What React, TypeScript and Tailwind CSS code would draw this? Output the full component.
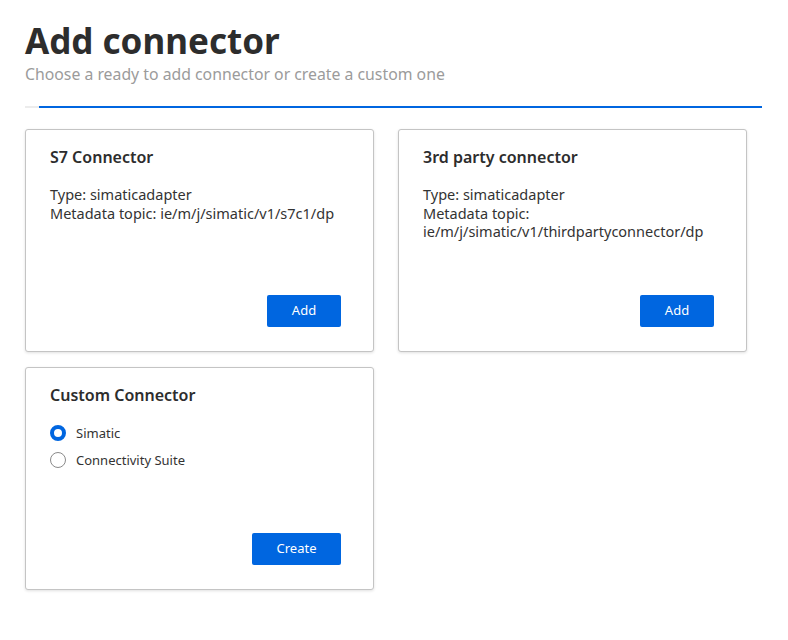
import React, { useState } from 'react';

const font = { fontFamily: '"Noto Sans", "Open Sans", sans-serif' };

const ConnectorCard = ({ title, type, topic, wrap }: { title: string; type: string; topic: string; wrap?: boolean }) => (
  <div className="flex h-[223px] w-[349px] flex-col rounded-[3px] border border-[#c4c4c4] bg-white px-6 pb-6 pt-[16px] shadow-[0_1px_3px_rgba(0,0,0,0.12)]">
    <h2 className="text-[16px] font-semibold leading-[22px] text-[#2d2d2d]">{title}</h2>
    <div className="mt-[17px] text-[14.5px] leading-[18.5px] text-[#333]">
      <p>Type: {type}</p>
      {wrap ? (
        <>
          <p>Metadata topic:</p>
          <p>{topic}</p>
        </>
      ) : (
        <p>Metadata topic: {topic}</p>
      )}
    </div>
    <div className="mt-auto flex justify-end pr-2">
      <button className="h-8 w-[74px] rounded-[2px] bg-[#0066e0] text-[13px] text-white">Add</button>
    </div>
  </div>
);

const Radio = ({ checked, label, onClick }: { checked: boolean; label: string; onClick: () => void }) => (
  <label className="flex cursor-pointer items-center gap-[10px] text-[13px] leading-[18px] text-[#333]" onClick={onClick}>
    {checked ? (
      <span className="h-4 w-4 rounded-full border-[4px] border-[#0066e0] bg-white" />
    ) : (
      <span className="h-4 w-4 rounded-full border border-[#8a8a8a] bg-white" />
    )}
    {label}
  </label>
);

export default function App() {
  const [kind, setKind] = useState('simatic');

  return (
    <div className="min-h-screen bg-white px-[25px] pt-[20px]" style={font}>
      <h1 className="text-[35px] font-bold leading-[42px] text-[#2d2d2d]">Add connector</h1>
      <p className="mt-[1px] text-[15.8px] leading-[22px] text-[#9b9b9b]">Choose a ready to add connector or create a custom one</p>

      <div className="mt-[21px] flex h-[2px] w-[737px]">
        <div className="w-[14px] bg-[#ececec]" />
        <div className="flex-1 bg-[#0066e0]" />
      </div>

      <div className="mt-[21px] flex flex-wrap gap-x-[24px] gap-y-[15px]">
        <ConnectorCard title="S7 Connector" type="simaticadapter" topic="ie/m/j/simatic/v1/s7c1/dp" />
        <ConnectorCard title="3rd party connector" type="simaticadapter" topic="ie/m/j/simatic/v1/thirdpartyconnector/dp" wrap />

        <div className="flex h-[223px] w-[349px] flex-col rounded-[3px] border border-[#c4c4c4] bg-white px-6 pb-6 pt-[16px] shadow-[0_1px_3px_rgba(0,0,0,0.12)]">
          <h2 className="text-[16px] font-semibold leading-[22px] text-[#2d2d2d]">Custom Connector</h2>
          <div className="mt-[18px] flex flex-col gap-[9px]">
            <Radio checked={kind === 'simatic'} label="Simatic" onClick={() => setKind('simatic')} />
            <Radio checked={kind === 'suite'} label="Connectivity Suite" onClick={() => setKind('suite')} />
          </div>
          <div className="mt-auto flex justify-end pr-2">
            <button className="h-8 w-[89px] rounded-[2px] bg-[#0066e0] text-[13px] text-white">Create</button>
          </div>
        </div>
      </div>
    </div>
  );
}
